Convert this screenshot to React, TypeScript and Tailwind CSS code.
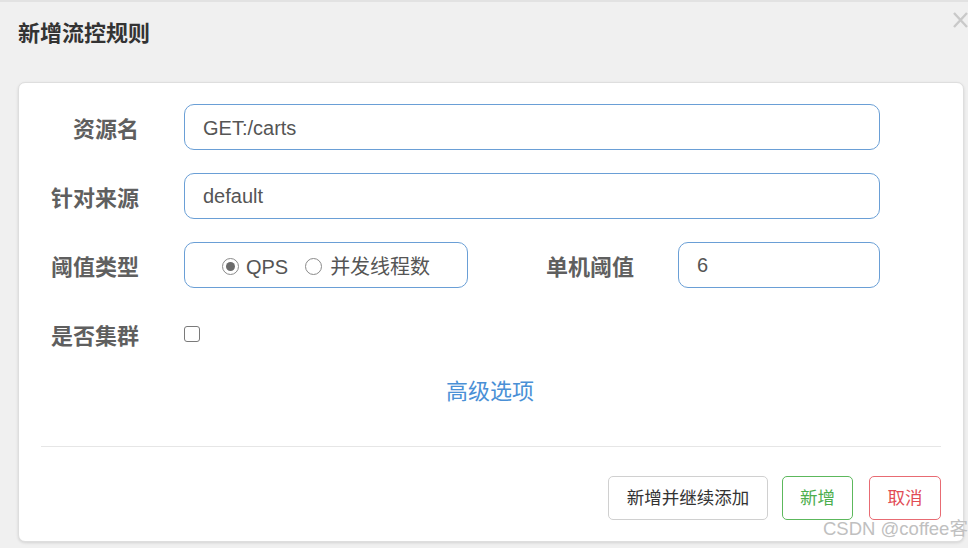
import React from "react";

const FONT = { fontFamily: '"Liberation Sans", "Noto Sans CJK SC", sans-serif' };

function Label({ children, w = "w-[121px]" }: { children: React.ReactNode; w?: string }) {
  return (
    <div className={`${w} shrink-0 pt-[6px] text-right text-[22px] font-bold text-[#5f5f5f] leading-none`}>{children}</div>
  );
}

function Radio({ checked }: { checked?: boolean }) {
  return (
    <span className="w-[17px] h-[17px] rounded-full border border-[#8a8a8a] bg-white flex items-center justify-center shrink-0">
      {checked && <span className="w-[9px] h-[9px] rounded-full bg-[#6b6b6b]" />}
    </span>
  );
}

export default function App() {
  return (
    <div style={FONT} className="relative w-[968px] h-[548px] overflow-hidden bg-[#f0f0f0] border-t-2 border-[#e2e2e2]">
      <div className="h-[80px] pl-[18px] pt-[18px]">
        <div className="text-[22px] font-bold text-[#333] leading-[28px]">新增流控规则</div>
      </div>
      <svg className="absolute right-[0px] top-[9px]" width="16" height="18" viewBox="0 0 16 18">
        <path d="M2 2 L15 16 M15 2 L2 16" stroke="#c9c9c9" strokeWidth="2.4" fill="none" />
      </svg>

      <div className="ml-[18px] w-[946px] h-[460px] bg-white rounded-[7px] border border-[#dedede] shadow-[0_1px_3px_rgba(0,0,0,0.12)] px-[22px] pt-[21px] flex flex-col">
        <div className="flex flex-col gap-[23px]">
          <div className="flex items-center h-[46px]">
            <Label w="w-[98px]">资源名</Label>
            <div className="ml-[45px] w-[696px] h-[46px] rounded-[10px] border border-[#6a9fd6] flex items-center pl-[18px] pt-[1px] text-[20px] text-[#555]">
              GET:/carts
            </div>
          </div>
          <div className="flex items-center h-[46px]">
            <Label w="w-[98px]">针对来源</Label>
            <div className="ml-[45px] w-[696px] h-[46px] rounded-[10px] border border-[#6a9fd6] flex items-center pl-[18px] text-[20px] text-[#555]">
              default
            </div>
          </div>
          <div className="flex items-center h-[46px]">
            <Label w="w-[98px]">阈值类型</Label>
            <div className="ml-[45px] w-[284px] h-[46px] rounded-[10px] border border-[#6a9fd6] flex items-center justify-center pt-[3px] text-[20px] text-[#555]">
              <Radio checked />
              <span className="ml-[7px]">QPS</span>
              <span className="ml-[17px]"><Radio /></span>
              <span className="ml-[8px]">并发线程数</span>
            </div>
            <Label w="w-[166px]">单机阈值</Label>
            <div className="ml-[44px] w-[202px] h-[46px] rounded-[10px] border border-[#6a9fd6] flex items-center pl-[18px] text-[20px] text-[#555]">
              6
            </div>
          </div>
          <div className="flex items-center h-[46px]">
            <Label w="w-[98px]">是否集群</Label>
            <span className="ml-[45px] w-[16px] h-[16px] rounded-[3px] border-[1.5px] border-[#7a7a7a] bg-white" />
          </div>
        </div>
        <div className="mt-[11px] h-[46px] flex items-center justify-center text-[22px] text-[#4a90d6]">
          <span className="ml-[-2px]">高级选项</span>
        </div>
        <div className="mt-[32px] h-px bg-[#e6e6e6]" />
        <div className="mt-[29px] flex justify-end items-center">
          <button className="w-[160px] h-[44px] rounded-[5px] border border-[#d0d0d0] bg-white text-[17.5px] text-[#333]">新增并继续添加</button>
          <button className="ml-[14px] w-[71px] h-[44px] rounded-[5px] border border-[#5cb85c] bg-white text-[17.5px] text-[#4cae4c]">新增</button>
          <button className="ml-[16px] w-[72px] h-[44px] rounded-[5px] border border-[#e86b73] bg-white text-[17.5px] text-[#e24b55]">取消</button>
        </div>
      </div>

      <div className="absolute left-[823px] top-[515px] whitespace-nowrap text-[18.5px] text-[#c0c0c0] leading-[24px]">
        CSDN @coffee客
      </div>
    </div>
  );
}
